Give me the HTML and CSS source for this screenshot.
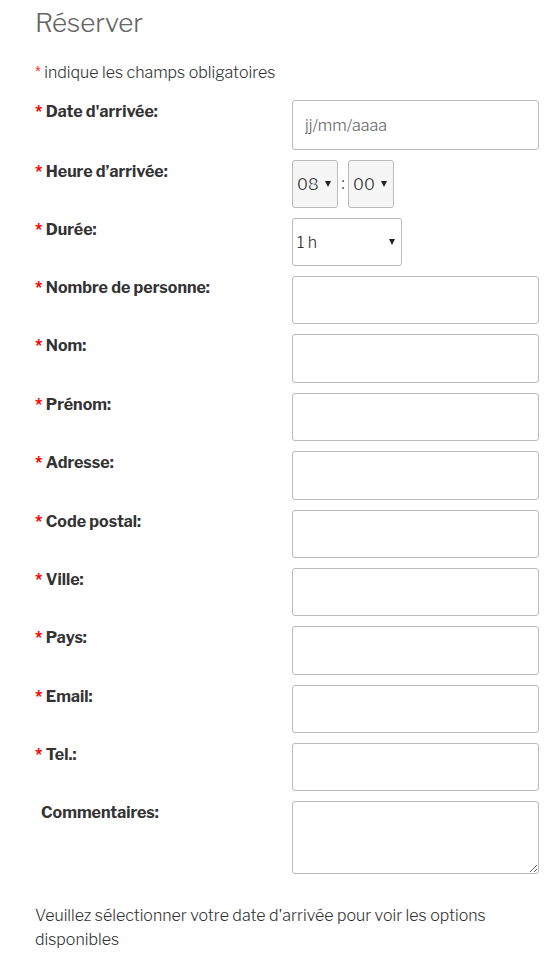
FILE: index.html
```html
<!DOCTYPE html>
<html lang="fr">
<head>
<meta charset="utf-8">
<meta name="viewport" content="width=device-width, initial-scale=1">
<title>Réserver</title>
<link rel="stylesheet" href="styles.css">
</head>
<body>
<main>
<h1>Réserver</h1>
<p class="hint"><span class="req">*</span> indique les champs obligatoires</p>
<form>
<div class="row date"><label for="date"><span class="req">*</span> Date d'arrivée:</label><input id="date" type="text" placeholder="jj/mm/aaaa"></div>
<div class="row"><label for="hour"><span class="req">*</span> Heure d’arrivée:</label>
<div class="time"><span class="pick shade"><select id="hour"><option>08</option></select></span><span class="colon">:</span><span class="pick shade"><select id="minute" aria-label="Minutes"><option>00</option></select></span></div></div>
<div class="row"><label for="duration"><span class="req">*</span> Durée:</label><div class="time"><span class="pick wide"><select id="duration"><option>1 h</option></select></span></div></div>
<div class="row"><label for="people"><span class="req">*</span> Nombre de personne:</label><input id="people" type="text"></div>
<div class="row roomy"><label for="name"><span class="req">*</span> Nom:</label><input id="name" type="text"></div>
<div class="row"><label for="first"><span class="req">*</span> Prénom:</label><input id="first" type="text"></div>
<div class="row roomy"><label for="address"><span class="req">*</span> Adresse:</label><input id="address" type="text"></div>
<div class="row"><label for="zip"><span class="req">*</span> Code postal:</label><input id="zip" type="text"></div>
<div class="row"><label for="city"><span class="req">*</span> Ville:</label><input id="city" type="text"></div>
<div class="row roomy"><label for="country"><span class="req">*</span> Pays:</label><input id="country" type="text"></div>
<div class="row"><label for="email"><span class="req">*</span> Email:</label><input id="email" type="email"></div>
<div class="row"><label for="tel"><span class="req">*</span> Tel.:</label><input id="tel" type="tel"></div>
<div class="row"><label class="optional" for="comments">Commentaires:</label><textarea id="comments"></textarea></div>
</form>
<p class="note">Veuillez sélectionner votre date d'arrivée pour voir les options disponibles</p>
</main>
</body>
</html>
```
FILE: styles.css
```css
* { box-sizing: border-box; }
body {
  margin: 0;
  background: #fff;
  color: #333;
  font: 300 16px/24px "Libre Franklin", Inter, "Liberation Sans", sans-serif;
}
main { padding: 5px 19px 15px 35px; }
h1 { margin: 0; font-size: 26px; line-height: 36px; font-weight: 300; color: #666; }
p { margin: 0; }
.hint { margin: 20px 0 15px; }
form { display: grid; gap: 10px; }
.row {
  display: grid;
  grid-template-columns: 257px minmax(0, 1fr);
  align-items: start;
}
label { font-weight: 700; }
.optional { padding-left: 6px; }
.req { color: #f00; }
input, textarea, select {
  width: 100%;
  margin: 0;
  border: 1px solid #bbb;
  border-radius: 3px;
  background: #fff;
  color: #333;
  font: inherit;
}
input { height: 48px; padding: 0 12px; }
.roomy input { height: 49px; }
.date input { height: 50px; }
input::placeholder { color: #666; opacity: 1; }
textarea { display: block; height: 73px; padding: 8px 12px; resize: vertical; }
.time { display: flex; align-items: center; }
.pick { position: relative; width: 46px; }
.wide { width: 110px; }
select { display: block; height: 48px; padding: 2px 4px 0; appearance: none; }
.shade select { background: #f5f5f5; }
.pick::after {
  content: "";
  position: absolute;
  right: 7px;
  top: 21px;
  border: solid transparent;
  border-width: 6px 3px 0;
  border-top-color: #222;
  pointer-events: none;
}
.colon { width: 10px; text-align: center; }
.note { margin-top: 30px; }
```
